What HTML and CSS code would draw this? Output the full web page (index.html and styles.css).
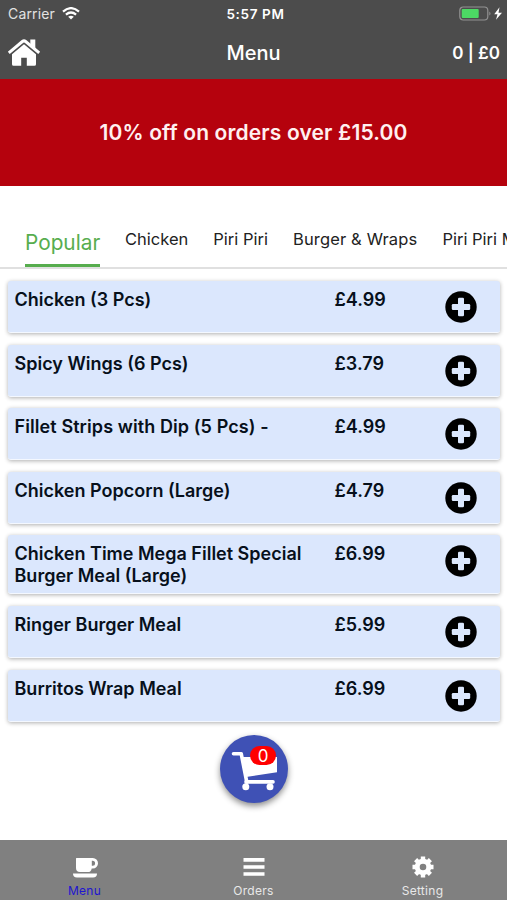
FILE: index.html
```html
<!DOCTYPE html>
<html lang="en">
<head>
<meta charset="utf-8">
<title>Menu</title>
<link rel="stylesheet" href="styles.css">
</head>
<body>
<svg width="0" height="0" class="defs"><symbol id="plus" viewBox="0 0 32 32"><circle cx="16" cy="16" r="15.7"/><rect x="13" y="6.800" width="6" height="18.400" rx="1.300" fill="#dbe7fd"/><rect x="6.800" y="13" width="18.400" height="6" rx="1.300" fill="#dbe7fd"/></symbol></svg>
<div class="app">
<header class="header">
  <div class="status">
    <div class="carrier"><span>Carrier</span>
      <svg width="18" height="13" viewBox="0 0 18 13" fill="none" stroke="#fff" stroke-width="2.2"><path d="M1 4.6Q9-2.4 17 4.6M3.9 7.6Q9 3.4 14.1 7.6"/><path d="M9 12.6L6.2 9.7Q9 7.6 11.8 9.7Z" fill="#fff" stroke="none"/></svg>
    </div>
    <span class="time">5:57 PM</span>
    <svg class="battery" width="44" height="15" viewBox="0 0 44 15"><rect x=".8" y="1" width="28" height="13" rx="3.5" fill="none" stroke="#929292" stroke-width="1.2"/><rect x="2.7" y="3" width="17" height="9" rx="1" fill="#4cd964"/><path d="M30.3 5.4q2.4 2.1 0 4.2z" fill="#929292"/><path d="M40.500 1.300L35.200 8.200h3.300l-1.500 5.500L43 6.800h-3.500z" fill="#fff"/></svg>
  </div>
  <div class="navbar">
    <svg class="home" width="34" height="29" viewBox="0 0 34 29" fill="#fff"><path d="M17 6.300L29 16.200v10q0 1.600-1.600 1.600h-7.600v-8.100h-5.600v8.100H6.600Q5 27.800 5 26.200v-10z"/><path d="M1.800 14.800L15.400 3.500q1.600-1.300 3.200 0L32.200 14.800" fill="none" stroke="#fff" stroke-width="3"/><path d="M23.300 1.600h5v10l-5-4z"/></svg>
    <h1>Menu</h1>
    <span class="total">0 | £0</span>
  </div>
</header>
<div class="promo">10% off on orders over £15.00</div>
<nav class="tabs"><span class="tab active">Popular</span><span class="tab chicken">Chicken</span><span class="tab piri">Piri Piri</span><span class="tab burger">Burger &amp; Wraps</span><span class="tab">Piri Piri Meals</span></nav>
<main class="items">
  <article class="item"><h2>Chicken (3 Pcs)</h2><b>£4.99</b><svg class="add"><use href="#plus"/></svg></article>
  <article class="item"><h2>Spicy Wings (6 Pcs)</h2><b>£3.79</b><svg class="add"><use href="#plus"/></svg></article>
  <article class="item"><h2 class="wide">Fillet Strips with Dip (5 Pcs) -</h2><b>£4.99</b><svg class="add"><use href="#plus"/></svg></article>
  <article class="item"><h2>Chicken Popcorn (Large)</h2><b>£4.79</b><svg class="add"><use href="#plus"/></svg></article>
  <article class="item tall"><h2>Chicken Time Mega Fillet Special<br>Burger Meal (Large)</h2><b>£6.99</b><svg class="add"><use href="#plus"/></svg></article>
  <article class="item"><h2>Ringer Burger Meal</h2><b>£5.99</b><svg class="add"><use href="#plus"/></svg></article>
  <article class="item"><h2>Burritos Wrap Meal</h2><b>£6.99</b><svg class="add"><use href="#plus"/></svg></article>
</main>
<div class="cart">
  <svg width="68" height="68" viewBox="0 0 68 68" fill="#fff"><path d="M13.500 18.700h7.700l5.600 28.500" fill="none" stroke="#fff" stroke-width="3.600" stroke-linejoin="round" stroke-linecap="round"/><path d="M22.500 22H57v15.300L26 42z"/><path d="M26 46.900h27" stroke="#fff" stroke-width="3.600" stroke-linecap="round"/><circle cx="25.800" cy="51.800" r="3.500"/><circle cx="50" cy="51.800" r="3.500"/></svg>
  <span class="badge">0</span>
</div>
<footer class="bottom">
  <div class="dest current"><svg width="28" height="24" viewBox="0 0 28 24" fill="#fff"><path d="M5.500 2h16.300a5.200 5.200 0 0 1 0 10.400h-1.100q-.5 3.600-4 3.600H9q-4 0-4-4V2.500q0-.5.500-.500zM20.800 4.800v5h.8a2.500 2.500 0 0 0 0-5z" fill-rule="evenodd"/><path d="M2 17.500h24q0 4-4 4H6q-4 0-4-4z"/></svg><span>Menu</span></div>
  <div class="dest"><svg width="28" height="24" viewBox="0 0 28 24"><path d="M3.500 3.900h21M3.500 11h21M3.500 18h21" stroke="#fff" stroke-width="3.600"/></svg><span>Orders</span></div>
  <div class="dest"><svg width="28" height="24" viewBox="0 0 28 24"><g transform="translate(14 11)" fill="none" stroke="#fff"><circle r="5.800" stroke-width="5"/><path d="M0-7v-3.500M0 7v3.500M7 0h3.500M-7 0h-3.500M5 5l2.400 2.400M-5-5l-2.400-2.400M5-5l2.400-2.400M-5 5l-2.400 2.400" stroke-width="4.400"/></g></svg><span>Setting</span></div>
</footer>
</div>
</body>
</html>
```
FILE: styles.css
```css
* { box-sizing: border-box; }
body { margin: 0; background: #fff; font-family: Inter, "Liberation Sans", sans-serif; color: #000; }
.defs { position: absolute; }
.app { width: 100%; height: 900px; display: flex; flex-direction: column; overflow: hidden; }
.header { height: 79px; flex: none; background: #4c4c4c; color: #fff; }
.status { height: 27px; display: grid; grid-template-columns: 1fr auto 1fr; align-items: center; padding: 0 4px 0 8px; }
.carrier { display: flex; align-items: center; gap: 7px; font-size: 14px; line-height: 20px; letter-spacing: .15px; color: #e2e2e2; }
.time { font-size: 13.500px; line-height: 20px; font-weight: 600; letter-spacing: .7px; white-space: nowrap; }
.time { letter-spacing: .65px; }
.battery { justify-self: end; }
.navbar { height: 52px; padding: 0 7px; display: grid; grid-template-columns: 1fr auto 1fr; align-items: center; }
.home { margin-top: -1px; }
.navbar h1 { margin: 0; font-size: 20px; line-height: 26px; font-weight: 500; }
.total { justify-self: end; font-size: 17px; line-height: 26px; font-weight: 600; }
.promo { height: 107px; flex: none; background: #b5020d; color: #fff0f0; display: flex; align-items: center; justify-content: center; font-size: 21px; letter-spacing: .14px; font-weight: 600; white-space: nowrap; }
.tabs { height: 83px; flex: none; padding-left: 25px; display: flex; align-items: flex-end; gap: 25px; border-bottom: 2px solid #e0e0e0; white-space: nowrap; overflow: hidden; font-size: 16.500px; line-height: 20px; color: #222; }
.tab { padding-bottom: 18px; flex: none; }
.burger { letter-spacing: .15px; }
.tab.active { width: 75px; height: 38px; padding: 0; border-bottom: 3px solid #57ad4e; color: #57ad4e; font-size: 20.800px; line-height: 28px; }
.items { flex: none; padding: 12px 7px 0 8px; display: flex; flex-direction: column; gap: 11.600px; }
.item { height: 52px; padding: 8px 23px 0 6.500px; display: grid; grid-template-columns: 320px 1fr 32px; align-items: start; background: #dbe7fd; border-radius: 3px; border-bottom: 1px solid #f4f8ff; box-shadow: 0 1px 4px rgba(0,0,0,.32); }
.item.tall { height: 59px; }
.item h2, .item b { margin: 0; font-size: 18px; line-height: 22px; font-weight: 600; color: #07101b; white-space: nowrap; }
.item .wide { letter-spacing: .09px; }
.add { width: 32px; height: 32px; margin-top: 2px; }
.cart { position: relative; width: 68px; height: 68px; margin: 13px 0 0 220px; flex: none; border-radius: 50%; background: #3f51b5; box-shadow: 0 3px 6px rgba(0,0,0,.45); }
.badge { position: absolute; left: 30px; top: 11px; width: 26px; height: 19px; border-radius: 10px; background: #f00; color: #fff; font-size: 17px; line-height: 20px; text-align: center; }
.bottom { height: 60px; margin-top: auto; flex: none; background: #808080; display: grid; grid-template-columns: repeat(3, 1fr); }
.dest { display: flex; flex-direction: column; align-items: center; padding-top: 16px; font-size: 12px; letter-spacing: .3px; line-height: 16px; color: #e8e8e8; }
.dest span { margin-top: 3px; }
.current { color: #2015d0; }
```
